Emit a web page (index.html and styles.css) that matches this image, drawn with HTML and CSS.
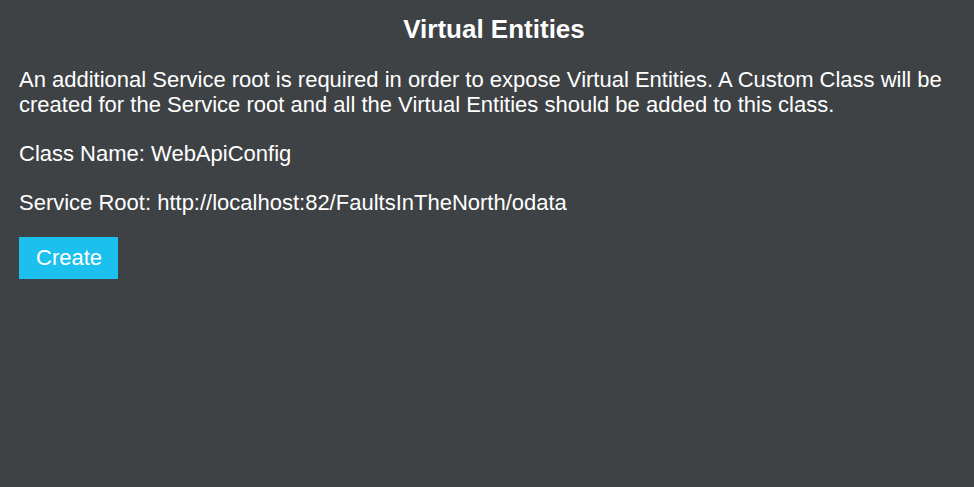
FILE: index.html
```html
<!DOCTYPE html>
<html>
<head>
<meta charset="utf-8">
<link rel="stylesheet" href="styles.css">
</head>
<body>
<main class="panel">
  <h1 class="title">Virtual Entities</h1>
  <p class="text">An additional Service root is required in order to expose Virtual Entities. A Custom Class will be created for the Service root and all the Virtual Entities should be added to this class.</p>
  <p class="text">Class Name: WebApiConfig</p>
  <p class="text">Service Root: http://localhost:82/FaultsInTheNorth/odata</p>
  <div class="actions"><button class="btn">Create</button></div>
</main>
</body>
</html>
```

FILE: styles.css
```css
html, body {
  margin: 0;
  padding: 0;
  background: #3e4245;
  height: 100%;
}
body {
  font-family: "Liberation Sans", Arial, sans-serif;
  color: #ffffff;
}
.panel {
  display: flex;
  flex-direction: column;
  padding: 14px 5px 0 19px;
}
.title {
  margin: 0 0 23px 0;
  font-size: 26px;
  font-weight: bold;
  text-align: center;
  line-height: 30px;
}
.text {
  margin: 0 0 24px 0;
  font-size: 22px;
  line-height: 25px;
}
.actions {
  margin-top: -2px;
}
.btn {
  font-family: "Liberation Sans", Arial, sans-serif;
  font-size: 22px;
  line-height: 25px;
  color: #ffffff;
  background: #1cc0ee;
  border: none;
  border-radius: 0;
  padding: 8px 16px 9px 17px;
  width: 99px;
  height: 42px;
}
```
